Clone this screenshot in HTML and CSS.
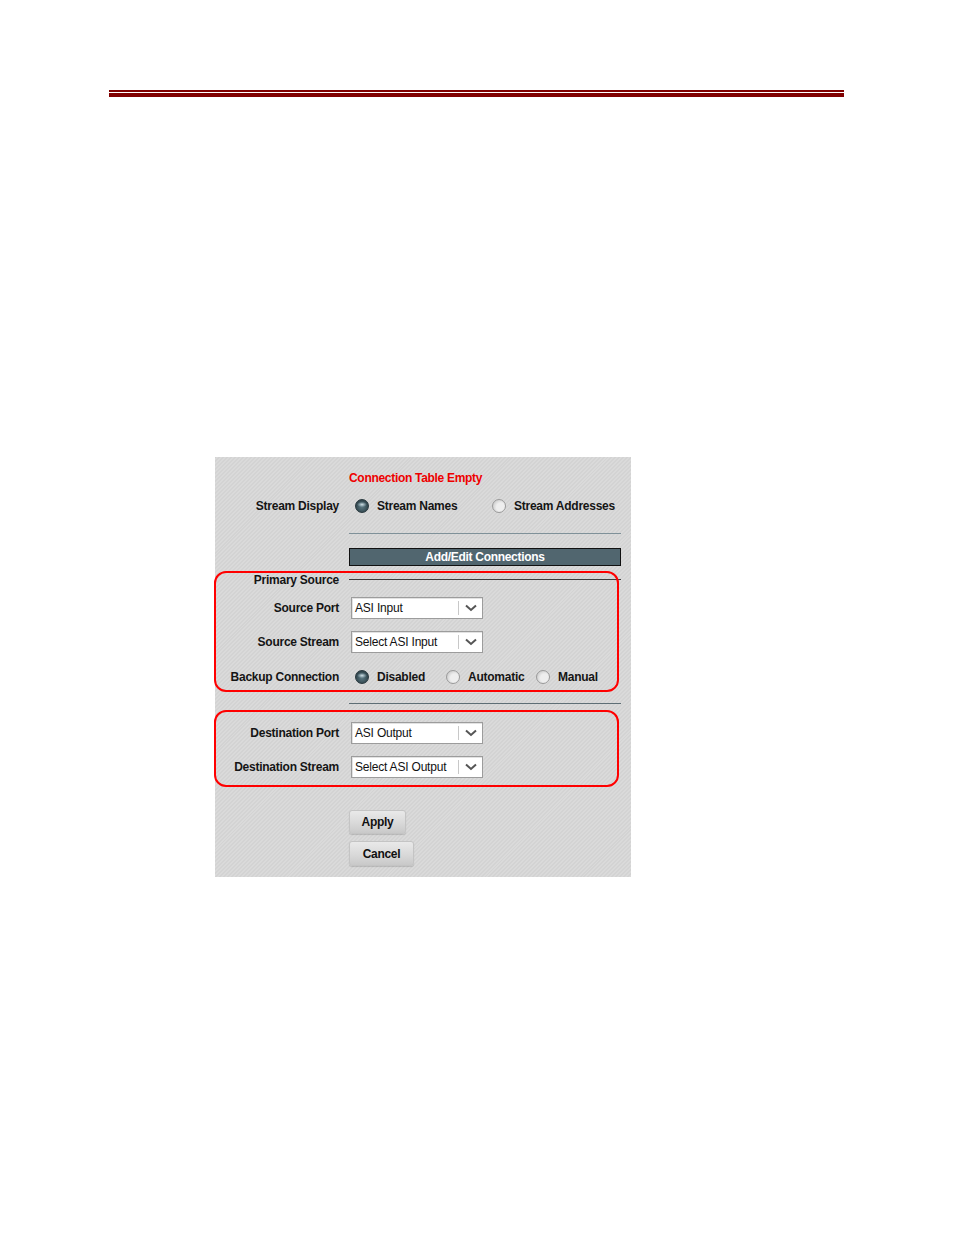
FILE: index.html
```html
<!DOCTYPE html>
<html>
<head>
<meta charset="utf-8">
<title>Add/Edit Connections</title>
<link rel="stylesheet" href="styles.css">
</head>
<body>
<div class="page">
  <div class="rule"></div>

  <div class="panel">
    <div class="row row-title">
      <div></div>
      <div class="status">Connection Table Empty</div>
    </div>

    <div class="row row-radio row-display">
      <div class="label">Stream Display</div>
      <div class="options">
        <span class="option opt-names"><span class="radio checked"></span>Stream Names</span>
        <span class="option"><span class="radio"></span>Stream Addresses</span>
      </div>
    </div>

    <div class="row row-sep1">
      <div></div>
      <div class="sep sep-light"></div>
    </div>

    <div class="row row-header">
      <div></div>
      <div class="header">Add/Edit Connections</div>
    </div>

    <div class="row row-section">
      <div class="label">Primary Source</div>
      <div class="sep sep-dark"></div>
    </div>

    <div class="row row-select row-srcport">
      <div class="label">Source Port</div>
      <div class="select"><span class="select-text">ASI Input</span><span class="select-btn"><svg width="12" height="8" viewBox="0 0 12 8"><path d="M1 1.5 L6 6 L11 1.5" fill="none" stroke="#555" stroke-width="2"/></svg></span></div>
    </div>

    <div class="row row-select row-srcstream">
      <div class="label">Source Stream</div>
      <div class="select"><span class="select-text">Select ASI Input</span><span class="select-btn"><svg width="12" height="8" viewBox="0 0 12 8"><path d="M1 1.5 L6 6 L11 1.5" fill="none" stroke="#555" stroke-width="2"/></svg></span></div>
    </div>

    <div class="row row-radio row-backup">
      <div class="label">Backup Connection</div>
      <div class="options">
        <span class="option opt-disabled"><span class="radio checked"></span>Disabled</span>
        <span class="option opt-auto"><span class="radio"></span>Automatic</span>
        <span class="option"><span class="radio"></span>Manual</span>
      </div>
    </div>

    <div class="row row-sep2">
      <div></div>
      <div class="sep sep-mid"></div>
    </div>

    <div class="row row-select row-dstport">
      <div class="label">Destination Port</div>
      <div class="select"><span class="select-text">ASI Output</span><span class="select-btn"><svg width="12" height="8" viewBox="0 0 12 8"><path d="M1 1.5 L6 6 L11 1.5" fill="none" stroke="#555" stroke-width="2"/></svg></span></div>
    </div>

    <div class="row row-select row-dststream">
      <div class="label">Destination Stream</div>
      <div class="select"><span class="select-text">Select ASI Output</span><span class="select-btn"><svg width="12" height="8" viewBox="0 0 12 8"><path d="M1 1.5 L6 6 L11 1.5" fill="none" stroke="#555" stroke-width="2"/></svg></span></div>
    </div>

    <div class="row row-apply">
      <div></div>
      <div><button class="btn">Apply</button></div>
    </div>

    <div class="row row-cancel">
      <div></div>
      <div><button class="btn btn-cancel">Cancel</button></div>
    </div>

    <div class="highlight highlight-source"></div>
    <div class="highlight highlight-dest"></div>
  </div>
</div>
</body>
</html>
```

FILE: styles.css
```css
html, body {
  margin: 0;
  padding: 0;
  background: #ffffff;
}

body {
  font-family: "Liberation Sans", Arial, sans-serif;
  font-size: 12px;
  color: #111;
}

.page {
  width: 954px;
  height: 1235px;
  overflow: hidden;
}

.rule {
  margin: 90px 0 0 109px;
  width: 735px;
  height: 1px;
  border-top: 2px solid #800000;
  border-bottom: 4px solid #800000;
}

.panel {
  position: relative;
  margin: 360px 0 0 215px;
  width: 416px;
  height: 420px;
  box-sizing: border-box;
  padding: 11px 10px 0 0;
  background: repeating-linear-gradient(135deg, #d3d3d3 0 1.4px, #dadada 1.4px 2.8px);
}

.row {
  display: grid;
  grid-template-columns: 124px 272px;
  column-gap: 10px;
  align-items: center;
}

.label {
  text-align: right;
  font-weight: bold;
  letter-spacing: -0.25px;
  white-space: nowrap;
  color: #151515;
}

.status {
  color: #ee0000;
  font-weight: bold;
  letter-spacing: -0.3px;
}

.row-title { height: 20px; }
.row-display { margin-top: 8px; height: 20px; }
.row-sep1 { margin-top: 17px; height: 1px; }
.row-header { margin-top: 14px; height: 18px; }
.row-section { margin-top: 4px; height: 20px; }
.row-srcport { margin-top: 7px; height: 22px; }
.row-srcstream { margin-top: 12px; height: 22px; }
.row-backup { margin-top: 14px; height: 20px; }
.row-sep2 { margin-top: 16px; height: 1px; }
.row-dstport { margin-top: 18px; height: 22px; }
.row-dststream { margin-top: 12px; height: 22px; }
.row-apply { margin-top: 32px; height: 24px; }
.row-cancel { margin-top: 7px; height: 25px; }

.sep {
  height: 1px;
  align-self: start;
}
.sep-light { background: #7f9199; }
.sep-mid { background: #5e6e75; }
.sep-dark {
  background: #3c3c3c;
  align-self: center;
  margin-top: -1px;
}

.header {
  box-sizing: border-box;
  height: 18px;
  border: 1px solid #111;
  background: #51666f;
  color: #ffffff;
  font-weight: bold;
  letter-spacing: -0.3px;
  text-align: center;
  line-height: 17px;
}

.options {
  display: flex;
  align-items: center;
  padding-left: 6px;
}

.option {
  display: inline-flex;
  align-items: center;
  font-weight: bold;
  letter-spacing: -0.25px;
  white-space: nowrap;
  color: #151515;
}

.opt-names { width: 137px; }
.opt-disabled { width: 91px; }
.opt-auto { width: 90px; }

.radio {
  box-sizing: border-box;
  width: 14px;
  height: 14px;
  border-radius: 50%;
  margin-right: 8px;
  border: 1px solid #9a9a9a;
  background: radial-gradient(circle at 65% 60%, #eeeeee 0 40%, #d0d0d0 75%, #aaaaaa 100%);
  flex: none;
}

.radio.checked {
  border: 1px solid #26363c;
  background:
    radial-gradient(ellipse 40% 22% at 50% 38%, rgba(220, 235, 240, 0.9) 0, rgba(160, 185, 195, 0.4) 70%, transparent 100%),
    radial-gradient(circle at 50% 55%, #5f7b85 0, #3b525a 55%, #1f2e34 100%);
}

.select {
  box-sizing: border-box;
  margin-left: 2px;
  width: 132px;
  height: 22px;
  display: flex;
  align-items: center;
  background: #ffffff;
  border: 1px solid #9c9c9c;
  box-shadow: inset 1px 1px 0 #e2e2e2;
}

.select-text {
  flex: 1;
  padding-left: 3px;
  font-weight: normal;
  letter-spacing: -0.2px;
  color: #111;
  white-space: nowrap;
  overflow: hidden;
}

.select-btn {
  width: 23px;
  height: 14px;
  border-left: 1px solid #c8c8c8;
  display: flex;
  align-items: center;
  justify-content: center;
}

.select-btn svg {
  display: block;
}

.btn {
  box-sizing: border-box;
  height: 24px;
  width: 57px;
  padding: 0;
  border: 1px solid #c4c4c4;
  border-radius: 3px;
  background: linear-gradient(#e9e9e9, #d9d9d9 55%, #c9c9c9);
  font-family: "Liberation Sans", Arial, sans-serif;
  font-size: 12px;
  font-weight: bold;
  letter-spacing: -0.3px;
  color: #111;
  box-shadow: 0 1px 1px rgba(0, 0, 0, 0.15);
}

.btn-cancel {
  width: 65px;
  height: 25px;
}

.highlight {
  position: absolute;
  left: -1px;
  width: 405px;
  box-sizing: border-box;
  border: 2px solid #ff0000;
  border-radius: 12px;
  pointer-events: none;
}

.highlight-source {
  top: 114px;
  height: 121px;
}

.highlight-dest {
  top: 253px;
  height: 77px;
}
```
